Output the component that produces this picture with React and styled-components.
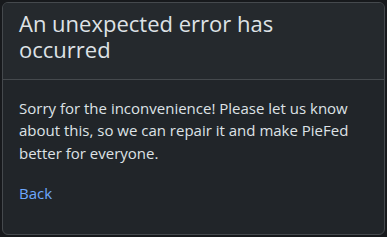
import React from "react";
import styled, { createGlobalStyle } from "styled-components";

const GlobalStyle = createGlobalStyle`
  html, body, #root {
    height: 100%;
  }
  body {
    margin: 0;
    padding: 2px;
    box-sizing: border-box;
    background-color: #17191c;
    color: #dee2e6;
    font-family: "Open Sans", "Noto Sans", sans-serif;
  }
  * {
    box-sizing: border-box;
  }
`;

const Card = styled.div`
  height: 100%;
  display: flex;
  flex-direction: column;
  background-color: #212529;
  border: 1px solid #45494d;
  border-radius: 6px;
  overflow: hidden;
`;

const CardHeader = styled.div`
  padding: 7px 16px 16px;
  background-color: #25292d;
  border-bottom: 1px solid #45494d;
`;

const Title = styled.h1`
  margin: 0;
  font-size: 22px;
  font-weight: 400;
  line-height: 1.2;
  color: #dee2e6;
`;

const CardBody = styled.div`
  padding: 17px 16px 16px;
  flex: 1;
`;

const Text = styled.p`
  margin: 0 0 18px;
  font-size: 15px;
  line-height: 1.5;
`;

const Link = styled.a`
  color: #6ea8fe;
  font-size: 15px;
  line-height: 1.5;
  text-decoration: none;
`;

const App = () => {
  return (
    <>
      <GlobalStyle />
      <Card>
        <CardHeader>
          <Title>An unexpected error has occurred</Title>
        </CardHeader>
        <CardBody>
          <Text>
            Sorry for the inconvenience! Please let us know about this, so we
            can repair it and make PieFed better for everyone.
          </Text>
          <Link href="#">Back</Link>
        </CardBody>
      </Card>
    </>
  );
};

export default App;
